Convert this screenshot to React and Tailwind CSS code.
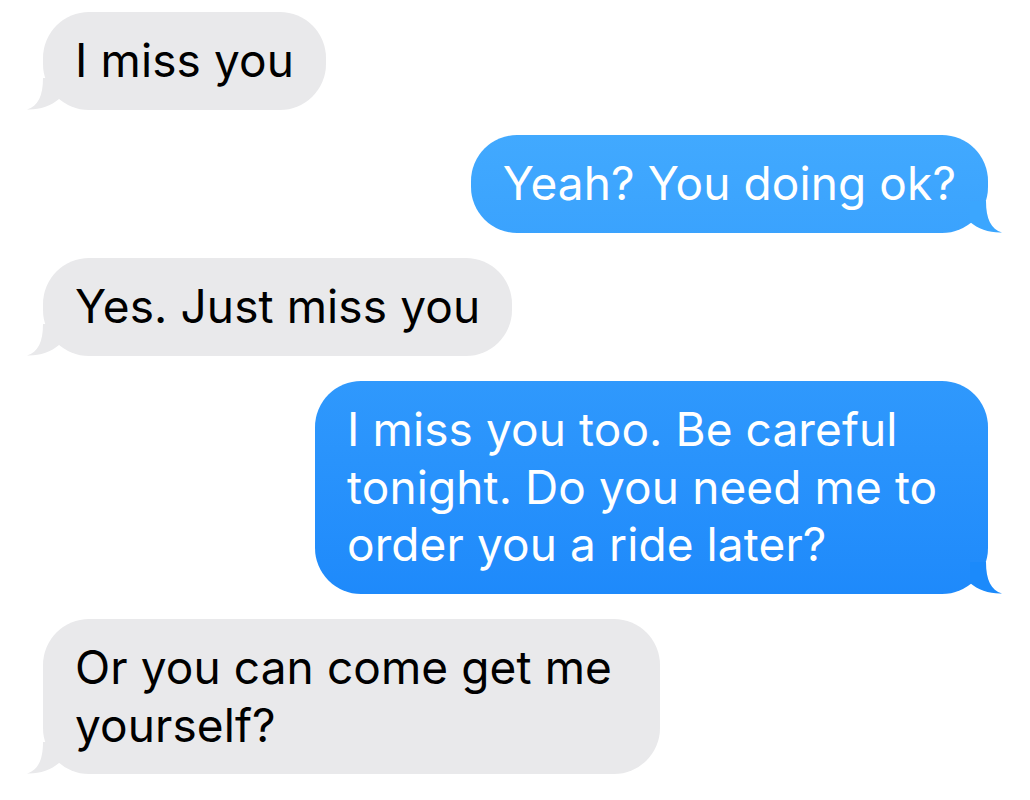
import React from "react";

const messages = [
  { from: "them", lines: ["I miss you"] },
  { from: "me", lines: ["Yeah? You doing ok?"], tail: "#3ba6fe" },
  { from: "them", lines: ["Yes. Just miss you"] },
  {
    from: "me",
    lines: ["I miss you too. Be careful", "tonight. Do you need me to", "order you a ride later?"],
    tail: "#1b8afb",
    width: "w-[673px]",
  },
  { from: "them", lines: ["Or you can come get me", "yourself?"], width: "w-[617px]" },
];

// little curled tail under the bubble corner
const Tail = ({ mine, color }) => (
  <svg
    width="34"
    height="32"
    viewBox="0 0 34 32"
    className={
      mine
        ? "absolute -right-[14px] bottom-0 -scale-x-100"
        : "absolute -left-[16px] bottom-0"
    }
  >
    <path d="M16 0 C16 18 11 28 0 31.5 C12 32 24 28 32 21 L32 0 Z" fill={color} />
  </svg>
);

const Bubble = ({ msg }) => {
  const mine = msg.from === "me";
  return (
    <div className={mine ? "self-end" : "self-start"}>
      <div
        className={
          (mine
            ? "relative rounded-[46px] px-8 py-5 bg-linear-to-b from-[#4bb2ff] to-[#097bf9] bg-fixed text-white "
            : "relative rounded-[46px] px-8 py-5 bg-[#e9e9eb] text-black ") + (msg.width || "")
        }
      >
        <p className="relative z-10 whitespace-nowrap text-[46px] leading-[57.5px] tracking-[0.1px]">
          {msg.lines.map((line, i) => (
            <span key={i} className="block">
              {line}
            </span>
          ))}
        </p>
        <Tail mine={mine} color={mine ? msg.tail : "#e9e9eb"} />
      </div>
    </div>
  );
};

export default function App() {
  return (
    <div
      className="min-h-[800px] w-[1030px] bg-white pt-3 pl-[43px] pr-[42px] flex flex-col gap-[25.5px]"
      style={{ fontFamily: "Inter, 'Noto Sans', sans-serif" }}
    >
      {messages.map((m, i) => (
        <Bubble key={i} msg={m} />
      ))}
    </div>
  );
}
